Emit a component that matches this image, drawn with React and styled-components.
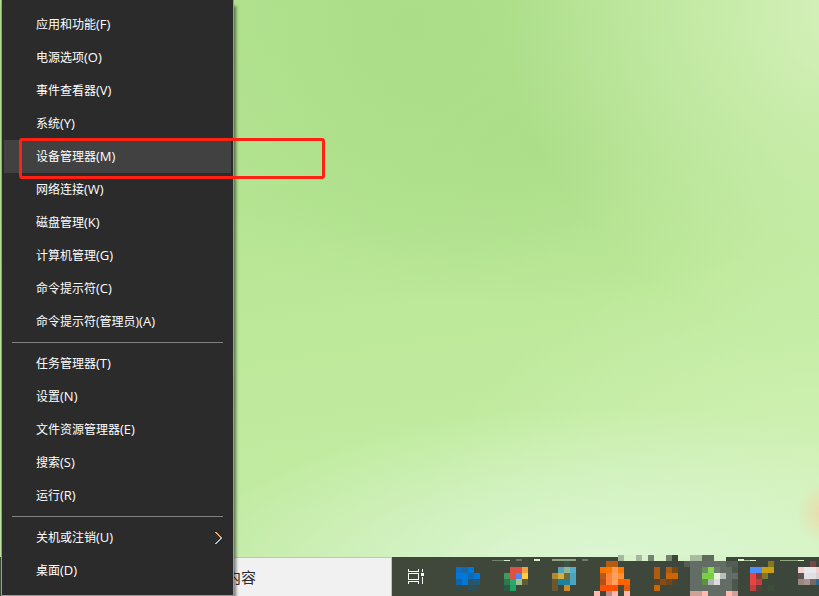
import styled, { createGlobalStyle, css } from "styled-components";

const menuGroups = [
  [
    { label: "应用和功能", keyHint: "(F)" },
    { label: "电源选项", keyHint: "(O)" },
    { label: "事件查看器", keyHint: "(V)" },
    { label: "系统", keyHint: "(Y)" },
    { label: "设备管理器", keyHint: "(M)", active: true },
    { label: "网络连接", keyHint: "(W)" },
    { label: "磁盘管理", keyHint: "(K)" },
    { label: "计算机管理", keyHint: "(G)" },
    { label: "命令提示符", keyHint: "(C)" },
    { label: "命令提示符(管理员)", keyHint: "(A)" },
  ],
  [
    { label: "任务管理器", keyHint: "(T)" },
    { label: "设置", keyHint: "(N)" },
    { label: "文件资源管理器", keyHint: "(E)" },
    { label: "搜索", keyHint: "(S)" },
    { label: "运行", keyHint: "(R)" },
  ],
  [
    { label: "关机或注销", keyHint: "(U)", submenu: true },
    { label: "桌面", keyHint: "(D)" },
  ],
];

const PALE = "#d8f2c9";
const PINK = "#ffb9b1";

// Pixel icons: [column, row, colour], optionally [.., columns, rows].
// Dashes are plain [x, y, width, height, colour] marks along the bar's top edge.
const apps = [
  {
    name: "mail",
    cells: [
      [0, 2, "#0b6fc6"], [1, 2, "#1b67a3"], [2, 2, "#0078d7"],
      [0, 3, "#0078d7"], [1, 3, "#0078d7"], [2, 3, "#1468ae"], [3, 3, "#0078d7"],
      [0, 4, "#1266a8"], [1, 4, "#0078d7"], [2, 4, "#2a5566"], [3, 4, "#235874"],
      [0, 5, "#324a48"], [2, 5, "#2c4f58"], [3, 5, "#364b4a"],
    ],
  },
  {
    name: "browser",
    cells: [
      [1, 2, "#de5246", 2], [3, 2, "#f0a03c"],
      [0, 3, "#3f9a60"], [1, 3, "#de5246"], [2, 3, "#4c8bf5"], [3, 3, "#ffcd40"],
      [0, 4, "#2a7a4c"], [1, 4, "#2ea56c"], [2, 4, "#a0c08c"], [3, 4, "#5c5c38"],
      [0, 5, "#2c5a42"], [1, 5, "#1ea362"],
    ],
    dashes: [[4, 3, 12, 1, "#72816b"], [16, 3, 6, 1, PALE], [28, 2, 6, 2, "#6a7764"], [46, 2, 6, 2, PALE]],
  },
  {
    name: "pictures",
    cells: [
      [2, 1, "#3d544e"],
      [1, 2, "#55a3bb"], [2, 2, "#8db894"], [3, 2, "#55adc8"],
      [0, 3, "#b08a30"], [1, 3, "#d0b040"], [2, 3, "#73683a"], [3, 3, "#4aa5bf"],
      [0, 4, "#6b5730"], [1, 4, "#1d8299"], [2, 4, "#1f7fa0"], [3, 4, "#4aa5bf"],
      [0, 5, "#6b5730"], [2, 5, "#d08a28"],
    ],
    dashes: [[16, 2, 24, 2, "#8fa685"], [46, 2, 6, 2, "#6f7b6b"]],
  },
  {
    name: "media",
    cells: [
      [3, 0, "#a8b8a0"], [4, 0, PALE, 2],
      [1, 1, "#b85a10", 2],
      [0, 2, "#ff7200"], [1, 2, "#ff7800"], [2, 2, "#ff9850"], [3, 2, "#ff7800"],
      [0, 3, "#b85a14"], [1, 3, "#ff8238"], [2, 3, "#ffa060"], [3, 3, "#ff9038"],
      [0, 4, "#b84f14"], [1, 4, "#ff8238"], [2, 4, "#ffa060"], [3, 4, "#ff6400", 2],
      [0, 5, "#ff5000", 3], [3, 5, "#4a4a38"], [4, 5, "#e05a10"],
      [-1, 6, PINK], [1, 6, "#c08a85"], [2, 6, PINK], [4, 6, PINK],
    ],
  },
  {
    name: "editor",
    cells: [
      [-2, 0, "#a8b8a0"], [-1, 0, PALE], [0, 0, "#75826f"], [1, 0, PALE, 2],
      [3, 0, "#75826f"], [4, 0, "#3e463a"], [5, 0, PALE, 2],
      [1, 2, "#b05c10"], [3, 2, "#b05c10"], [4, 2, "#7a4718"],
      [1, 3, "#b05c10"], [3, 3, "#cc6600", 2],
      [1, 4, "#54442c"], [2, 4, "#8a4a14"], [3, 4, "#6f461f"], [4, 4, "#4a4630"],
      [1, 5, "#cc6600"],
    ],
  },
  {
    name: "chat",
    cells: [
      [-1, 0, "#a8bca0", 2], [1, 0, "#606b5e", 2], [3, 0, PALE, 2],
      [-2, 1, "#535d53"], [-1, 1, "#636d65", 7, 6], [5, 1, "#545e54", 2, 1],
      [6, 2, "#4c564c"], [6, 3, "#636d65"], [6, 4, "#4c564c", 1, 2],
      [1, 2, "#6a9060"], [2, 2, "#88d850"], [3, 2, "#70806a"],
      [1, 3, "#78d048"], [2, 3, "#78d040"], [3, 3, "#e8f0e0"], [4, 3, "#b8bfbc"],
      [1, 4, "#5f9048"], [2, 4, "#b4b8b4"], [3, 4, "#dcdcdc"],
      [-1, 6, "#cfa098", 2], [1, 6, PINK], [5, 6, PINK], [6, 6, "#cfa098"],
    ],
  },
  {
    name: "notes",
    cells: [
      [4, 1, "#85771e"],
      [1, 2, "#4c90ff", 2], [3, 2, "#c8a010", 2],
      [1, 3, "#ea4343"], [2, 3, "#804038"], [3, 3, "#7d7a2c"],
      [1, 4, "#ea4343"], [2, 4, "#c04040"],
      [1, 5, "#c04040"], [2, 5, "#5a4038"], [4, 5, "#3d4f38"],
    ],
    dashes: [[10, 2, 6, 2, PALE], [16, 3, 6, 1, "#a8b8a0"], [22, 3, 6, 1, PALE]],
  },
  {
    name: "player",
    cells: [
      [3, 1, "#7a4848"],
      [1, 2, "#f0d0d0"], [2, 2, "#e8e8ec", 2], [4, 2, "#f0d0d0"],
      [1, 3, "#60504c"], [2, 3, "#e0e0e4", 2], [4, 3, "#d8d0d4"],
      [1, 4, "#988880"], [2, 4, "#a59490"], [3, 4, "#786864"], [4, 4, "#2a6a8a"],
    ],
    dashes: [[4, 3, 18, 1, "#8fa685"], [22, 3, 6, 1, PALE]],
  },
];

export default function App() {
  return (
    <>
      <GlobalStyle />
      <Screen>
        <Desktop />
        <Taskbar>
          <StartButton type="button" aria-label="开始" />
          <SearchInput type="text" aria-label="搜索" placeholder="内容" />
          <TaskButton type="button" aria-label="任务视图">
            <TaskViewIcon />
          </TaskButton>
          {apps.map((app) => (
            <TaskButton key={app.name} type="button" aria-label={app.name}>
              <PixelIcon cells={app.cells} dashes={app.dashes} />
            </TaskButton>
          ))}
        </Taskbar>

        <Menu role="menu">
          {menuGroups.map((group, i) => (
            <Group key={i}>
              {group.map((item) => (
                <Item
                  key={item.label}
                  type="button"
                  role="menuitem"
                  $active={item.active}
                >
                  <Label>
                    {item.label}
                    <KeyHint>{item.keyHint}</KeyHint>
                  </Label>
                  {item.submenu && <Chevron />}
                  {item.active && <Marker />}
                </Item>
              ))}
            </Group>
          ))}
        </Menu>
      </Screen>
    </>
  );
}

function PixelIcon({ cells, dashes = [] }) {
  return (
    <IconSvg width="48" height="39" viewBox="0 0 48 39" shapeRendering="crispEdges">
      {cells.map(([col, row, fill, w = 1, h = 1]) => (
        <rect
          key={`${col}-${row}-${fill}`}
          x={16 + col * 6}
          y={row * 6 - 2}
          width={w * 6}
          height={h * 6}
          fill={fill}
        />
      ))}
      {dashes.map(([x, y, w, h, fill]) => (
        <rect key={x} x={x} y={y} width={w} height={h} fill={fill} />
      ))}
    </IconSvg>
  );
}

function TaskViewIcon() {
  return (
    <IconSvg width="48" height="39" viewBox="0 0 48 39" shapeRendering="crispEdges" fill="#fff">
      <path d="M16 12h1v2h9v-2h1v3H16z" />
      <path d="M16 16h11v7H16zM17 17v5h9v-5z" fillRule="evenodd" />
      <path d="M16 27v-3h11v3h-1v-2h-9v2z" />
      <path d="M30 12h1v3h-1zM29 16h3v3h-3zM30 20h1v7h-1z" />
    </IconSvg>
  );
}

function Chevron() {
  return (
    <ChevronSvg width="10" height="14" viewBox="0 0 10 14" fill="none">
      <path d="M2 1l6 6-6 6" stroke="#8fb8d8" />
      <path d="M3 1l6 6-6 6" stroke="#e8924a" />
      <path d="M2.5 1l6 6-6 6" stroke="#ffd9b0" strokeOpacity="0.5" />
    </ChevronSvg>
  );
}

/* Styled Components */
const GlobalStyle = createGlobalStyle`
  * {
    box-sizing: border-box;
  }

  body {
    margin: 0;
    overflow: hidden;
    font-family: "Open Sans", "Noto Sans CJK SC", sans-serif;
  }

  button,
  input {
    font-family: inherit;
    border: none;
    border-radius: 0;
    outline: none;
  }
`;

const Screen = styled.main`
  position: relative;
  min-height: 100vh;
  display: flex;
  flex-direction: column;
  overflow: hidden;
`;

const Desktop = styled.section`
  flex: 1;
  background:
    radial-gradient(circle at 101% 92%, rgba(240, 208, 160, 0.85) 0, rgba(238, 214, 164, 0.5) 14px, rgba(236, 218, 168, 0) 32px),
    radial-gradient(ellipse 52% 30% at 74% 103%, #dbf6d2 10%, rgba(219, 246, 210, 0.6) 50%, rgba(219, 246, 210, 0) 100%),
    radial-gradient(ellipse 42% 60% at 104% 2%, #d6f1bc 0%, rgba(214, 241, 188, 0.55) 38%, rgba(214, 241, 188, 0) 100%),
    radial-gradient(ellipse 52% 52% at 104% 96%, #d3f2b8 10%, rgba(211, 242, 184, 0.6) 45%, rgba(211, 242, 184, 0) 100%),
    radial-gradient(ellipse 34% 50% at 50% 4%, #abdd88 0%, rgba(171, 221, 136, 0.5) 50%, rgba(171, 221, 136, 0) 100%),
    radial-gradient(ellipse 34% 30% at 66% 26%, #addf8a 0%, rgba(173, 223, 138, 0.5) 45%, rgba(173, 223, 138, 0) 100%),
    linear-gradient(172deg, #b2e290 0%, #b5e592 35%, #bde99a 55%, #c1eba0 75%, #c4eaa8 100%);
`;

const Taskbar = styled.footer`
  display: flex;
  height: 39px;
  background: linear-gradient(90deg, #414a3b, #3d463a);
`;

const StartButton = styled.button`
  flex: 0 0 48px;
  padding: 0;
  background: transparent;
`;

const SearchInput = styled.input`
  flex: 0 0 344px;
  min-width: 0;
  padding: 0 0 0 178px;
  background: #f1f1f1;
  box-shadow: inset -1px 1px 0 #c2c2c2;
  color: #2b2b2b;
  font-size: 15px;

  &::placeholder {
    color: #2b2b2b;
    opacity: 1;
  }
`;

const TaskButton = styled.button`
  flex: 0 0 48px;
  padding: 0;
  background: transparent;
`;

const IconSvg = styled.svg`
  display: block;
  overflow: visible;
`;

const Menu = styled.div`
  position: absolute;
  top: 0;
  left: 1px;
  width: 233px;
  padding: 8px 2px;
  border: 1px solid #9a9a9a;
  border-top: none;
  background: #2b2b2b;
  box-shadow: 2px 6px 3px rgba(0, 0, 0, 0.5);
`;

const Group = styled.div`
  & + &::before {
    content: "";
    display: block;
    height: 1px;
    margin: 4px 8px;
    background: #808080;
  }
`;

const Item = styled.button`
  display: flex;
  align-items: center;
  justify-content: space-between;
  width: 100%;
  height: 33px;
  padding: 0 8px 0 32px;
  background: transparent;
  color: #fff;
  font-size: 12px;
  line-height: 16px;
  text-align: left;

  ${(p) =>
    p.$active &&
    css`
      position: relative;
      background: #414141;
    `}
`;

const Label = styled.span`
  white-space: nowrap;
`;

const KeyHint = styled.span`
  font-size: 13px;
`;

const ChevronSvg = styled.svg`
  flex: none;
`;

/* Red frame around the highlighted entry, reaching out over the desktop */
const Marker = styled.span`
  position: absolute;
  top: -2px;
  left: 15px;
  width: 306px;
  height: 41px;
  border: 3px solid #ff2213;
  border-radius: 3px;
  pointer-events: none;
`;
